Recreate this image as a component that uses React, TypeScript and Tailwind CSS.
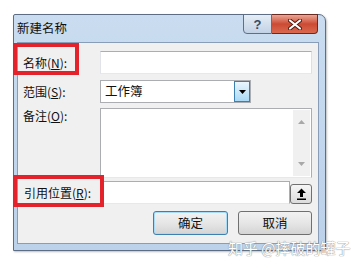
import React from "react";

const font = { fontFamily: '"Noto Sans CJK SC", "Liberation Sans", sans-serif' };

function U({ c }: { c: string }) {
  return <span className="underline underline-offset-[1px]">{c}</span>;
}

export default function App() {
  return (
    <div className="relative w-[351px] h-[271px] bg-white overflow-hidden pt-[14px] pl-[13px]" style={font}>
      {/* dialog */}
      <div className="w-[313px] h-[237px] border border-[#5c6d84] rounded-tr-[7px] rounded-tl-[2px] bg-gradient-to-b from-[#c9dcf0] to-[#bcd2ea] flex flex-col shadow-[1px_1px_2px_rgba(0,0,0,0.25)]">
        {/* title bar */}
        <div className="h-[27px] flex items-start">
          <div className="h-[27px] flex items-center pl-[3px] text-[12.5px] text-[#111] leading-none">新建名称</div>
          <div className="ml-auto mr-[7px] -mt-[1px] flex">
            <div className="w-[29px] h-[20px] border border-[#5f6f86] rounded-bl-[4px] bg-gradient-to-b from-[#e6eef7] via-[#d3dfed] to-[#c2d2e5] flex items-center justify-center">
              <span className="text-[13px] font-bold text-[#3b4a5e] leading-none" style={{ fontFamily: '"Liberation Sans", sans-serif' }}>?</span>
            </div>
            <div className="w-[46px] h-[20px] border border-l-0 border-[#6b2a20] rounded-br-[4px] bg-gradient-to-b from-[#e9a594] via-[#cc4a33] to-[#d86a50] flex items-center justify-center">
              <svg width="14" height="11" viewBox="0 0 14 11">
                <path d="M2 1.5 L12 9.5 M12 1.5 L2 9.5" stroke="#4a1a12" strokeWidth="4" strokeLinecap="round" />
                <path d="M2 1.5 L12 9.5 M12 1.5 L2 9.5" stroke="#ffffff" strokeWidth="2.2" strokeLinecap="round" />
              </svg>
            </div>
          </div>
        </div>
        {/* client */}
        <div className="ml-[3px] mr-[6px] h-[202px] border border-[#8a9db8] bg-[#f0f0f0] flex flex-col pr-[6px] text-[12px] text-[#111]">
          {/* name */}
          <div className="mt-[8px] flex h-[23px] items-center">
            <div className="w-[82px] pl-[5px]">名称(<U c="N" />):</div>
            <div className="w-[212px] h-[23px] bg-white border border-[#abadb3] border-b-[#e3e9ef] border-r-[#dbdfe6] border-l-[#e2e3ea]" />
          </div>
          {/* scope */}
          <div className="mt-[6px] flex h-[23px] items-center">
            <div className="w-[82px] pl-[5px]">范围(<U c="S" />):</div>
            <div className="w-[151px] h-[23px] bg-white border border-[#abadb3] flex items-center">
              <span className="pl-[4px] text-[12.5px]">工作簿</span>
              <div className="ml-auto w-[16px] h-[21px] border border-[#3c7fb1] bg-gradient-to-b from-[#eaf6fd] to-[#a9daf5] flex items-center justify-center">
                <svg width="7" height="4" viewBox="0 0 7 4"><path d="M0 0 H7 L3.5 4 Z" fill="#000" /></svg>
              </div>
            </div>
          </div>
          {/* comment */}
          <div className="mt-[5px] flex h-[70px]">
            <div className="w-[82px] pl-[5px] pt-[1px] leading-[13px]">备注(<U c="O" />):</div>
            <div className="w-[212px] h-[70px] bg-white border border-[#abadb3] border-b-[#e3e9ef] flex justify-end">
              <div className="w-[17px] mt-[1px] mb-[1px] mr-[1px] bg-[#f0f0f0] flex flex-col items-center justify-between py-[10px]">
                <svg width="7" height="4" viewBox="0 0 7 4"><path d="M0 4 H7 L3.5 0 Z" fill="#a8a8a8" /></svg>
                <svg width="7" height="4" viewBox="0 0 7 4"><path d="M0 0 H7 L3.5 4 Z" fill="#a8a8a8" /></svg>
              </div>
            </div>
          </div>
          {/* reference */}
          <div className="mt-[3px] flex h-[23px] items-center">
            <div className="w-[82px] pl-[6px]">引用位置(<U c="R" />):</div>
            <div className="w-[212px] h-[23px] flex items-end">
              <div className="flex-1 h-[23px] bg-white border border-[#abadb3] border-b-[#e3e9ef]" />
              <div className="w-[22px] h-[20px] border border-[#707070] rounded-[3px] bg-gradient-to-b from-[#f6f6f6] to-[#dcdcdc] flex items-center justify-center">
                <svg width="11" height="12" viewBox="0 0 11 12">
                  <path d="M5.5 0.5 L10 5 H7 V9 H4 V5 H1 Z" fill="#000" />
                  <rect x="1" y="10.5" width="9" height="1.5" fill="#000" />
                </svg>
              </div>
            </div>
          </div>
          {/* buttons */}
          <div className="mt-[7px] flex justify-end gap-[10px]">
            <div className="w-[75px] h-[24px] rounded-[3px] border border-[#3c7fb1] shadow-[inset_0_0_0_1px_#a8dcf6] bg-gradient-to-b from-[#f2f2f2] via-[#e6e6e6] to-[#d4d4d4] flex items-center justify-center text-[12.5px]">确定</div>
            <div className="w-[74px] h-[24px] rounded-[3px] border border-[#707070] bg-gradient-to-b from-[#f2f2f2] via-[#e6e6e6] to-[#d4d4d4] flex items-center justify-center text-[12.5px]">取消</div>
          </div>
        </div>
      </div>

      {/* annotation boxes */}
      <div className="absolute left-[13px] top-[43px] w-[66px] h-[32px] border-[4px] border-[#e3222b]" />
      <div className="absolute left-[13px] top-[175px] w-[91px] h-[32px] border-[4px] border-[#e3222b]" />

      {/* watermark */}
      <div className="absolute left-[228px] top-[238px] text-[15px] text-white leading-[20px] [text-shadow:0_0_1px_#8a8a8a,0_0_1px_#8a8a8a]">知乎 @摔破的罐子</div>
    </div>
  );
}
